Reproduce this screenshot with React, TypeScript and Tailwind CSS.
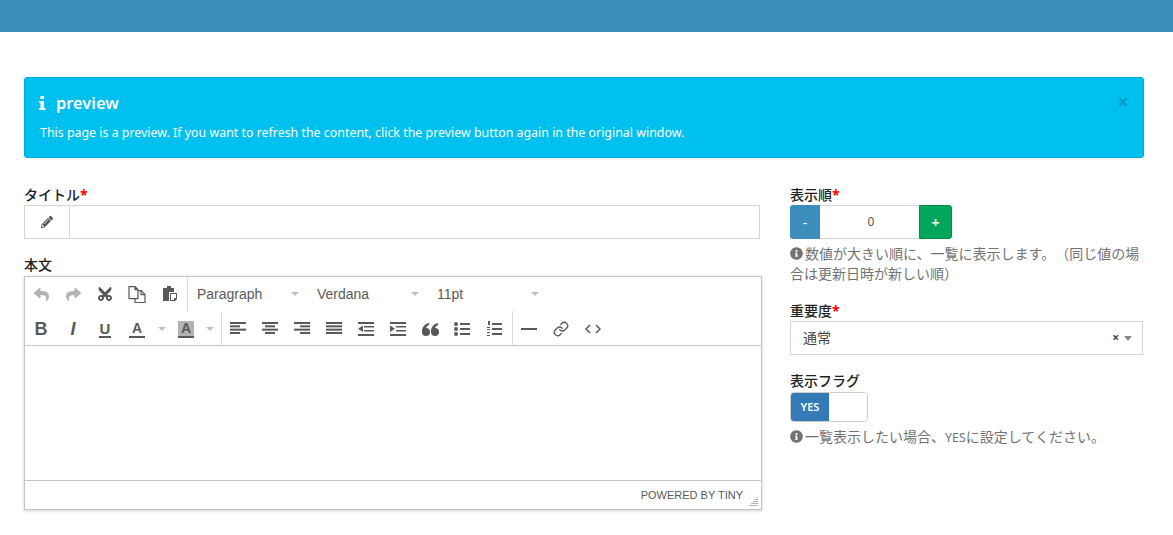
import { FaCut, FaInfoCircle, FaPencilAlt, FaReply, FaShare } from 'react-icons/fa';
import { Link } from 'lucide-react';

const sans = "font-['Source_Sans_Pro','Noto_Sans','Noto_Sans_CJK_JP',sans-serif]";

const Caret = () => <span className="block w-0 h-0 border-x-[4px] border-x-transparent border-t-[4px] border-t-[#bfbfbf]" />;

const IconButton: React.FC<{ children: React.ReactNode }> = ({ children }) => (
  <div className="w-8 h-[34px] flex items-center justify-center text-[#595959] shrink-0">{children}</div>
);

const FontSelect: React.FC<{ label: string }> = ({ label }) => (
  <div className="w-[120px] h-[34px] pl-[9px] pr-[9px] flex items-center justify-between text-[14px] text-[#595959] font-['Liberation_Sans',sans-serif] shrink-0">
    <span>{label}</span>
    <Caret />
  </div>
);

// rows: [x, width] for each of the four lines of an align icon
const Lines: React.FC<{ rows: [number, number][] }> = ({ rows }) => (
  <svg width="16" height="14" viewBox="0 0 16 14" fill="#595959">
    {rows.map(([x, w], i) => (
      <rect key={i} x={x} y={i * 3.33} width={w} height="2" />
    ))}
  </svg>
);

const Indent: React.FC<{ flip?: boolean }> = ({ flip }) => (
  <svg width="16" height="14" viewBox="0 0 16 14" fill="#595959">
    <rect x="0" y="0" width="16" height="2" />
    <rect x="6" y="4" width="10" height="1.5" />
    <rect x="6" y="8" width="10" height="1.5" />
    <rect x="0" y="12" width="16" height="2" />
    <path d={flip ? 'M5 3.5V10L0 6.75z' : 'M0 3.5V10l5-3.25z'} />
  </svg>
);

const Hint: React.FC<{ children: React.ReactNode }> = ({ children }) => (
  <p className="mt-[5px] text-[14px] leading-[20px] text-[#737373] [text-spacing-trim:space-all]">
    <FaInfoCircle className="inline-block text-[13px] mr-[2px] align-[-1px]" />
    {children}
  </p>
);

const Label: React.FC<{ text: string; required?: boolean }> = ({ text, required }) => (
  <label className="block h-[20px] text-[14px] leading-[20px] font-medium text-[#222]">
    {text}
    {required && <span className="text-[#ff0000] font-bold">*</span>}
  </label>
);

export default function App() {
  return (
    <div className={`${sans} min-h-[535px] bg-white`}>
      <div className="h-8 bg-[#3c8dbc]" />
      <div className="px-6 pt-[45px] w-[1168px]">
        <div className="relative h-[81px] rounded-[3px] border border-[#00acd6] bg-[#00c0ef] pl-[15px] pt-[14px] text-white">
          <h4 className="flex items-center h-[22px] text-[16.4px] font-semibold leading-[22px]">
            <svg className="-ml-px mr-[10px] shrink-0" width="7" height="14" viewBox="0 0 7 14" fill="currentColor">
              <path d="M1.5 0H5v3H1.5zM0 5h5v7h1.5v2H0v-2h1.5V7H0z" />
            </svg>
            preview
          </h4>
          <p className="mt-[9px] text-[12.4px] leading-[20px]">
            This page is a preview. If you want to refresh the content, click the preview button again in the original window.
          </p>
          <span className="absolute right-[15px] top-[19px] text-[#0a9cc0]">
            <svg className="block" width="10" height="10" viewBox="0 0 10 10" stroke="currentColor" strokeWidth="2" fill="none">
              <path d="M1 1l8 8M9 1l-8 8" />
            </svg>
          </span>
        </div>

        <div className="mt-[27px] flex gap-[28px]">
          <div className="w-[738px] shrink-0">
            <Label text="タイトル" required />
            <div className="w-[736px] h-[34px] flex border border-[#d2d6de]">
              <div className="w-[45px] flex items-center justify-center border-r border-[#d2d6de] text-[#555]">
                <FaPencilAlt className="text-[12px]" />
              </div>
              <div className="flex-1" />
            </div>

            <div className="mt-[16px]">
              <Label text="本文" />
            </div>
            <div className="mt-[1px] h-[234px] flex flex-col border border-[#c5c5c5] shadow-[0_1px_3px_rgba(0,0,0,0.2)]">
              <div className="border-b border-[#c5c5c5] h-[69px]">
                <div className="flex h-[34px]">
                  <IconButton><FaReply className="text-[15px] text-[#b3b3b3]" /></IconButton>
                  <IconButton><FaShare className="text-[15px] text-[#b3b3b3]" /></IconButton>
                  <IconButton><FaCut className="text-[16px] rotate-[-90deg]" /></IconButton>
                  <IconButton>
                    <svg width="18" height="17" viewBox="0 0 18 17" fill="none" stroke="#595959" strokeWidth="1.2">
                      <path d="M1 .6h6l3 3v9H1zM7 .6v3h3" />
                      <path d="M10 4.6h3l4 4v8H7v-4" />
                      <path d="M13 4.6v4h4" />
                    </svg>
                  </IconButton>
                  <div className="ml-px">
                    <IconButton>
                      <svg width="16" height="16" viewBox="0 0 16 16" fill="#595959">
                        <path d="M1 2h4V0h4v2h3v4H7v9H1z" />
                        <path d="M8 7h7v6l-2 2H8zm1 1v6h3v-2h2V8z" fillRule="evenodd" />
                      </svg>
                    </IconButton>
                  </div>
                  <div className="border-l border-[#d9d9d9] flex ml-px">
                    <FontSelect label="Paragraph" />
                    <FontSelect label="Verdana" />
                    <FontSelect label="11pt" />
                  </div>
                </div>
                <div className="flex h-[34px] pt-px font-['Liberation_Sans',sans-serif] text-[#595959]">
                  <IconButton><span className="text-[18px] font-bold">B</span></IconButton>
                  <IconButton><span className="text-[18px] font-bold italic">I</span></IconButton>
                  <IconButton><span className="text-[15px] font-bold border-b-2 border-[#595959] leading-[15px] px-px">U</span></IconButton>
                  <IconButton><span className="text-[14px] font-bold border-b-2 border-[#595959] leading-[15px] px-[3px]">A</span></IconButton>
                  <div className="w-[17px] h-[34px] flex items-center justify-center shrink-0"><Caret /></div>
                  <IconButton><span className="text-[14px] font-bold bg-[#b3b3b3] border-b-2 border-[#595959] leading-[15px] px-[3px]">A</span></IconButton>
                  <div className="w-4 h-[34px] flex items-center justify-center shrink-0"><Caret /></div>
                  <div className="w-[3px] shrink-0" />
                  <div className="h-[33px] border-l border-[#d9d9d9] flex">
                    <IconButton><Lines rows={[[0, 16], [0, 10], [0, 16], [0, 10]]} /></IconButton>
                    <IconButton><Lines rows={[[0, 16], [3, 10], [0, 16], [3, 10]]} /></IconButton>
                    <IconButton><Lines rows={[[0, 16], [6, 10], [0, 16], [6, 10]]} /></IconButton>
                    <IconButton><Lines rows={[[0, 16], [0, 16], [0, 16], [0, 16]]} /></IconButton>
                    <IconButton><Indent flip /></IconButton>
                    <IconButton><Indent /></IconButton>
                    <IconButton>
                      <svg width="17" height="13" viewBox="0 0 17 13" fill="#595959">
                        <circle cx="4" cy="9" r="4" />
                        <path d="M0 9C0 4 2.500.8 7 0v2C5 2.800 4 4.500 4 6z" />
                        <circle cx="13" cy="9" r="4" />
                        <path d="M9 9c0-5 2.500-8.200 7-9v2c-2 .8-3 2.500-3 4z" />
                      </svg>
                    </IconButton>
                    <IconButton>
                      <svg width="16" height="14" viewBox="0 0 16 14" fill="#595959">
                        <circle cx="2" cy="2" r="2" />
                        <circle cx="2" cy="7" r="2" />
                        <circle cx="2" cy="12" r="2" />
                        <rect x="6" y="1" width="10" height="2" />
                        <rect x="6" y="6" width="10" height="2" />
                        <rect x="6" y="11" width="10" height="2" />
                      </svg>
                    </IconButton>
                    <IconButton>
                      <svg width="16" height="16" viewBox="0 0 16 16" fill="#595959">
                        <rect x="2" y="0" width="2" height="4" />
                        <rect x="1" y="6" width="3" height="1" />
                        <rect x="1" y="8" width="3" height="1" />
                        <rect x="1" y="11" width="3" height="1" />
                        <rect x="1" y="14" width="3" height="1" />
                        <rect x="6" y="2" width="10" height="2" />
                        <rect x="6" y="7" width="10" height="2" />
                        <rect x="6" y="12" width="10" height="2" />
                      </svg>
                    </IconButton>
                    <div className="w-[2px]" />
                    <div className="border-l border-[#d9d9d9] flex -mt-px h-[34px]">
                      <div className="pt-px flex">
                        <IconButton><span className="block w-4 h-[2px] bg-[#595959]" /></IconButton>
                        <IconButton><Link size={16} strokeWidth={2} /></IconButton>
                        <IconButton>
                          <svg width="16" height="10" viewBox="0 0 16 10" fill="none" stroke="#595959" strokeWidth="1.5">
                            <path d="M5 1L1 5l4 4M11 1l4 4-4 4" />
                          </svg>
                        </IconButton>
                      </div>
                    </div>
                  </div>
                </div>
              </div>
              <div className="flex-1" />
              <div className="h-[29px] border-t border-[#c5c5c5] flex items-center justify-end pr-[18px] relative text-[11px] text-[#595959] font-['Liberation_Sans',sans-serif]">
                POWERED BY TINY
                <svg className="absolute right-[2px] bottom-[2px]" width="10" height="10" viewBox="0 0 10 10" fill="#b3b3b3">
                  <path d="M8 0h1v1H8zM6 2h3v1H6zM4 4h5v1H4zM2 6h7v1H2zM0 8h9v1H0z" />
                </svg>
              </div>
            </div>
          </div>

          <div className="w-[353px] shrink-0">
            <Label text="表示順" required />
            <div className="flex h-[34px] w-[162px]">
              <div className="w-[30px] flex items-center justify-center rounded-l-[3px] bg-[#3c8dbc] text-white text-[14px]">-</div>
              <div className="flex-1 flex items-center justify-center pl-[3px] border-y border-[#d2d6de] text-[12px] text-[#555]">0</div>
              <div className="w-[33px] flex items-center justify-center rounded-r-[3px] border border-[#008d4c] bg-[#00a65a] text-white text-[14px] font-bold">+</div>
            </div>
            <Hint>数値が大きい順に、一覧に表示します。（同じ値の場合は更新日時が新しい順）</Hint>

            <div className="mt-[17px]">
              <Label text="重要度" required />
            </div>
            <div className="h-[34px] flex items-center border border-[#d2d6de] pl-3 pr-[10px] text-[14px] text-[#444]">
              <span className="flex-1 -mt-[2px]">通常</span>
              <span className="text-[12px] font-bold mr-[5px]">×</span>
              <span className="block w-0 h-0 border-x-[4px] border-x-transparent border-t-[5px] border-t-[#888]" />
            </div>

            <div className="mt-[16px]">
              <Label text="表示フラグ" />
            </div>
            <div className="mt-[1px] flex h-[30px] w-[78px] rounded-[4px] border border-[#ccc] overflow-hidden">
              <div className="w-[38px] flex items-center justify-center bg-[#337ab7] text-white text-[11px] font-semibold">YES</div>
              <div className="flex-1 bg-white" />
            </div>
            <Hint>一覧表示したい場合、<span className="text-[12.4px]">YES</span>に設定してください。</Hint>
          </div>
        </div>
      </div>
    </div>
  );
}
